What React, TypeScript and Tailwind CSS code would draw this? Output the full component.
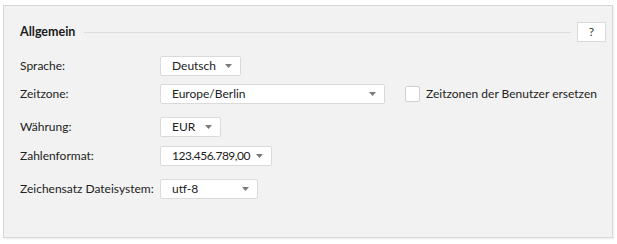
import React from "react";

function Caret() {
  return (
    <svg width="7" height="4" viewBox="0 0 7 4" className="shrink-0">
      <path d="M0 0H7L3.5 4Z" fill="#7a7a7a" />
    </svg>
  );
}

function Select({ value, width, tight = false }: { value: string; width: string; tight?: boolean }) {
  return (
    <div
      className={`flex h-[20px] items-center justify-between rounded-[2px] border border-[#dadada] bg-white pl-[11px] pr-[8px] text-[#222] ${width}`}
    >
      <span className={`whitespace-nowrap leading-none ${tight ? "tracking-[-0.5px]" : ""}`}>{value}</span>
      <Caret />
    </div>
  );
}

function Row({ label, children, className = "" }: { label: string; children: React.ReactNode; className?: string }) {
  return (
    <div className={`flex items-center ${className}`}>
      <div className="w-[140px] shrink-0 whitespace-nowrap text-[#222]">{label}</div>
      {children}
    </div>
  );
}

export default function App() {
  return (
    <div
      className="h-[244px] w-[617px] bg-white pl-[3px] pt-[5px] text-[12px]"
      style={{ fontFamily: 'Lato, "Noto Sans", sans-serif' }}
    >
      <div className="flex h-[233px] w-[610px] flex-col border border-[#d6d6d6] bg-[#f2f2f2] pl-[16px] pr-[6px] pt-[16px] shadow-[1px_1px_2px_rgba(0,0,0,0.08)]">
        <div className="flex h-[20px] items-center">
          <span className="text-[12.5px] font-bold text-[#1a1a1a]">Allgemein</span>
          <div className="ml-[9px] mr-[6px] h-px flex-1 bg-[#dcdcdc]" />
          <div className="flex h-[20px] w-[29px] items-center justify-center border border-[#dadada] bg-white text-[#333]">
            ?
          </div>
        </div>
        <Row label="Sprache:" className="mt-[14px]">
          <Select value="Deutsch" width="w-[81px]" />
        </Row>
        <Row label="Zeitzone:" className="mt-[8px]">
          <Select value="Europe/Berlin" width="w-[225px]" />
          <div className="ml-[20px] h-[16px] w-[15px] rounded-[2px] border border-[#cfcfcf] bg-white" />
          <span className="ml-[6px] whitespace-nowrap text-[#222]">Zeitzonen der Benutzer ersetzen</span>
        </Row>
        <Row label="Währung:" className="mt-[13px]">
          <Select value="EUR" width="w-[61px]" />
        </Row>
        <Row label="Zahlenformat:" className="mt-[9px]">
          <Select value="123.456.789,00" width="w-[112px]" tight />
        </Row>
        <Row label="Zeichensatz Dateisystem:" className="mt-[13px]">
          <Select value="utf-8" width="w-[98px]" />
        </Row>
      </div>
    </div>
  );
}
